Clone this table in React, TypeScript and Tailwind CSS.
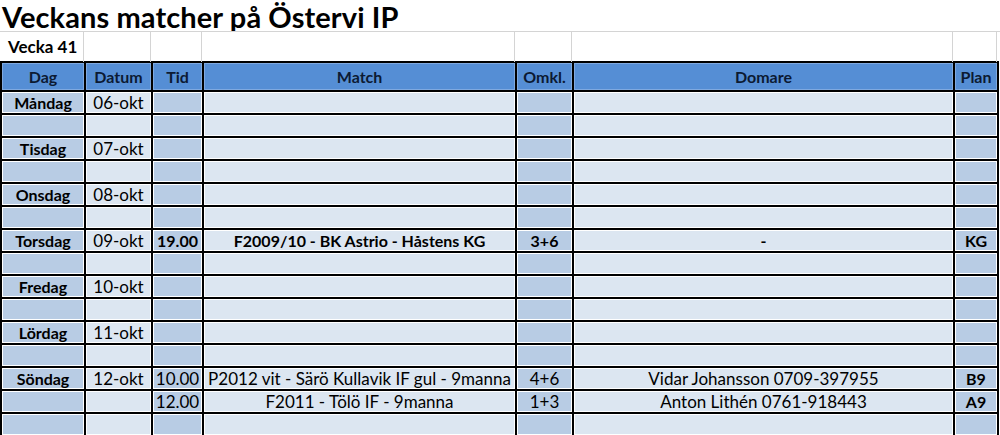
const cols = "grid-cols-[82px_65px_49px_311px_55px_379px_42px]"
const dark = "bg-[#b8cce4]"
const light = "bg-[#dce6f1]"
const colBg = [dark, light, dark, light, dark, light, dark]

type Row = {
  cells: string[]
  bold?: boolean[]
}

const empty = ["", "", "", "", "", "", ""]

const rows: Row[] = [
  { cells: ["Måndag", "06-okt", "", "", "", "", ""] },
  { cells: empty },
  { cells: ["Tisdag", "07-okt", "", "", "", "", ""] },
  { cells: empty },
  { cells: ["Onsdag", "08-okt", "", "", "", "", ""] },
  { cells: empty },
  {
    cells: ["Torsdag", "09-okt", "19.00", "F2009/10 - BK Astrio - Håstens KG", "3+6", "-", "KG"],
    bold: [true, false, true, true, true, true, true],
  },
  { cells: empty },
  { cells: ["Fredag", "10-okt", "", "", "", "", ""] },
  { cells: empty },
  { cells: ["Lördag", "11-okt", "", "", "", "", ""] },
  { cells: empty },
  {
    cells: ["Söndag", "12-okt", "10.00", "P2012 vit - Särö Kullavik IF gul - 9manna", "4+6", "Vidar Johansson 0709-397955", "B9"],
  },
  { cells: ["", "", "12.00", "F2011 - Tölö IF - 9manna", "1+3", "Anton Lithén 0761-918443", "A9"] },
  { cells: empty },
]

const headers = ["Dag", "Datum", "Tid", "Match", "Omkl.", "Domare", "Plan"]

export default function App() {
  return (
    <div
      className="w-[1000px] h-[435px] overflow-hidden bg-white text-black"
      style={{ fontFamily: "Lato, 'Open Sans', sans-serif" }}
    >
      <h1 className="h-[31px] pl-[2px] text-[29px] font-bold leading-[33px] tracking-[0.1px]">
        Veckans matcher på Östervi IP
      </h1>

      <div className="relative grid grid-cols-[84px_67px_51px_313px_57px_381px_44px] border-t border-[#d4d4d4] h-[30px] bg-white">
        <div className="border-r border-[#d4d4d4] pl-[8px] text-[17px] font-bold leading-[30px]">Vecka 41</div>
        <div className="border-r border-[#d4d4d4]" />
        <div className="border-r border-[#d4d4d4]" />
        <div className="border-r border-[#d4d4d4]" />
        <div className="border-r border-[#d4d4d4]" />
        <div className="border-r border-[#d4d4d4]" />
        <div className="border-r border-[#d4d4d4]" />
      </div>

      <div className={`grid ${cols} gap-[2px] bg-black p-[2px] w-[999px]`}>
        {headers.map((h) => (
          <div
            key={h}
            className="h-[27px] bg-[#558ed5] shadow-[inset_0_0_0_1px_#7fa9e0] flex items-center justify-center text-[16px] font-bold text-[#0c1a33]"
          >
            {h}
          </div>
        ))}
        {rows.map((r, i) =>
          r.cells.map((c, j) => {
            const isBold = r.bold ? r.bold[j] : j === 0 || j === 6
            return (
              <div
                key={`${i}-${j}`}
                className={`h-[21px] ${colBg[j]} shadow-[inset_0_0_0_1px_#fff] flex items-center justify-center whitespace-nowrap overflow-visible ${
                  isBold ? "text-[16px] font-bold" : "text-[17px] font-normal"
                }`}
              >
                {c}
              </div>
            )
          })
        )}
      </div>
    </div>
  )
}
